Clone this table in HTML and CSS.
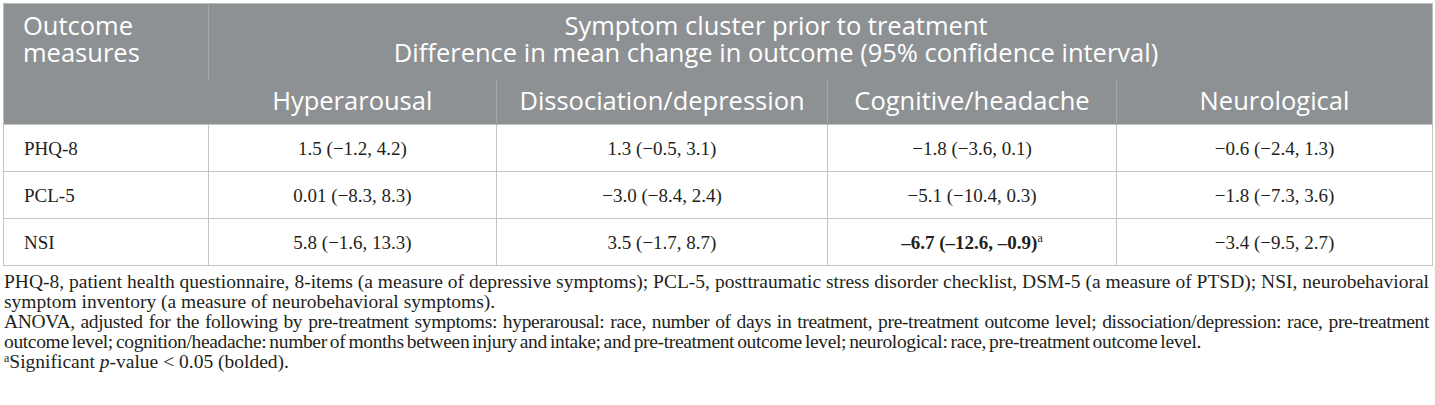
FILE: index.html
```html
<!DOCTYPE html>
<html lang="en">
<head>
  <meta charset="UTF-8" />
  <title>Symptom cluster outcomes</title>
  <link rel="stylesheet" href="styles.css">
</head>
<body>

<div class="table-wrap">
  <table class="results">
    <colgroup>
      <col class="col-measure">
      <col class="col-hyper">
      <col class="col-dissoc">
      <col class="col-cog">
      <col class="col-neuro">
    </colgroup>
    <thead>
      <tr>
        <th rowspan="2" class="measure-head">Outcome<br>measures</th>
        <th colspan="4" class="cluster-head">Symptom cluster prior to treatment<br>Difference in mean change in outcome (95% confidence interval)</th>
      </tr>
      <tr class="sub-head">
        <th>Hyperarousal</th>
        <th>Dissociation/depression</th>
        <th>Cognitive/headache</th>
        <th>Neurological</th>
      </tr>
    </thead>
    <tbody>
      <tr>
        <td>PHQ-8</td>
        <td>1.5 (−1.2, 4.2)</td>
        <td>1.3 (−0.5, 3.1)</td>
        <td>−1.8 (−3.6, 0.1)</td>
        <td>−0.6 (−2.4, 1.3)</td>
      </tr>
      <tr>
        <td>PCL-5</td>
        <td>0.01 (−8.3, 8.3)</td>
        <td>−3.0 (−8.4, 2.4)</td>
        <td>−5.1 (−10.4, 0.3)</td>
        <td>−1.8 (−7.3, 3.6)</td>
      </tr>
      <tr>
        <td>NSI</td>
        <td>5.8 (−1.6, 13.3)</td>
        <td>3.5 (−1.7, 8.7)</td>
        <td class="sig"><b>–6.7 (–12.6, –0.9)</b><sup>a</sup></td>
        <td>−3.4 (−9.5, 2.7)</td>
      </tr>
    </tbody>
  </table>

  <div class="notes">
    <p>PHQ-8, patient health questionnaire, 8-items (a measure of depressive symptoms); PCL-5, posttraumatic stress disorder checklist, DSM-5 (a measure of PTSD); NSI, neurobehavioral symptom inventory (a measure of neurobehavioral symptoms).</p>
    <p class="tight">ANOVA, adjusted for the following by pre-treatment symptoms: hyperarousal: race, number of days in treatment, pre-treatment outcome level; dissociation/depression: race, pre-treatment outcome level; cognition/headache: number of months between injury and intake; and pre-treatment outcome level; neurological: race, pre-treatment outcome level.</p>
    <p><sup>a</sup>Significant <i>p</i>-value &lt; 0.05 (bolded).</p>
  </div>
</div>

</body>
</html>
```

FILE: styles.css
```css
* {
  margin: 0;
  padding: 0;
  box-sizing: border-box;
}

body {
  background: #fff;
  font-family: "Liberation Serif", "Times New Roman", serif;
  color: #231f20;
}

.table-wrap {
  padding: 3px 3px 0 3px;
}

.results {
  width: 1429px;
  border-collapse: collapse;
  table-layout: fixed;
  border: 1px solid #b7c0bb;
}

.col-measure { width: 205px; }
.col-hyper { width: 288px; }
.col-dissoc { width: 331px; }
.col-cog { width: 289px; }
.col-neuro { width: 316px; }

.results th {
  background: #8e9193;
  color: #fff;
  font-family: "Open Sans", "Noto Sans", sans-serif;
  font-weight: 400;
  font-size: 25.5px;
  line-height: 27px;
  border-left: 1px solid #a4a7a9;
}

.results th:first-child {
  border-left: none;
}

.measure-head {
  text-align: left;
  vertical-align: top;
  padding: 8px 0 0 19px;
}

.cluster-head {
  text-align: center;
  height: 76px;
  padding: 8px 89px 0 0;
  vertical-align: top;
  background:
    linear-gradient(#9ea1a3, #9ea1a3) no-repeat left bottom / calc(100% - 28px) 1px,
    #8e9193;
}

.sub-head th {
  height: 45px;
  text-align: center;
  vertical-align: middle;
  padding-bottom: 2px;
}

.results td {
  height: 47px;
  font-size: 19px;
  text-align: center;
  vertical-align: middle;
  border: 1px solid #c3c6c5;
  padding-top: 1px;
}

.results td:first-child {
  text-align: left;
  padding-left: 20px;
}

.sig b {
  font-weight: 700;
}

.sig sup {
  font-size: 12px;
  vertical-align: 7px;
  line-height: 0;
}

.notes {
  padding: 6px 3px 0 1px;
  font-size: 19.5px;
  line-height: 19.5px;
  text-align: justify;
}

.notes p {
  margin-bottom: 1px;
}

.notes .tight {
  word-spacing: -1.5px;
  letter-spacing: -0.35px;
}

.notes sup {
  font-size: 12px;
  vertical-align: 6px;
  line-height: 0;
}
```
